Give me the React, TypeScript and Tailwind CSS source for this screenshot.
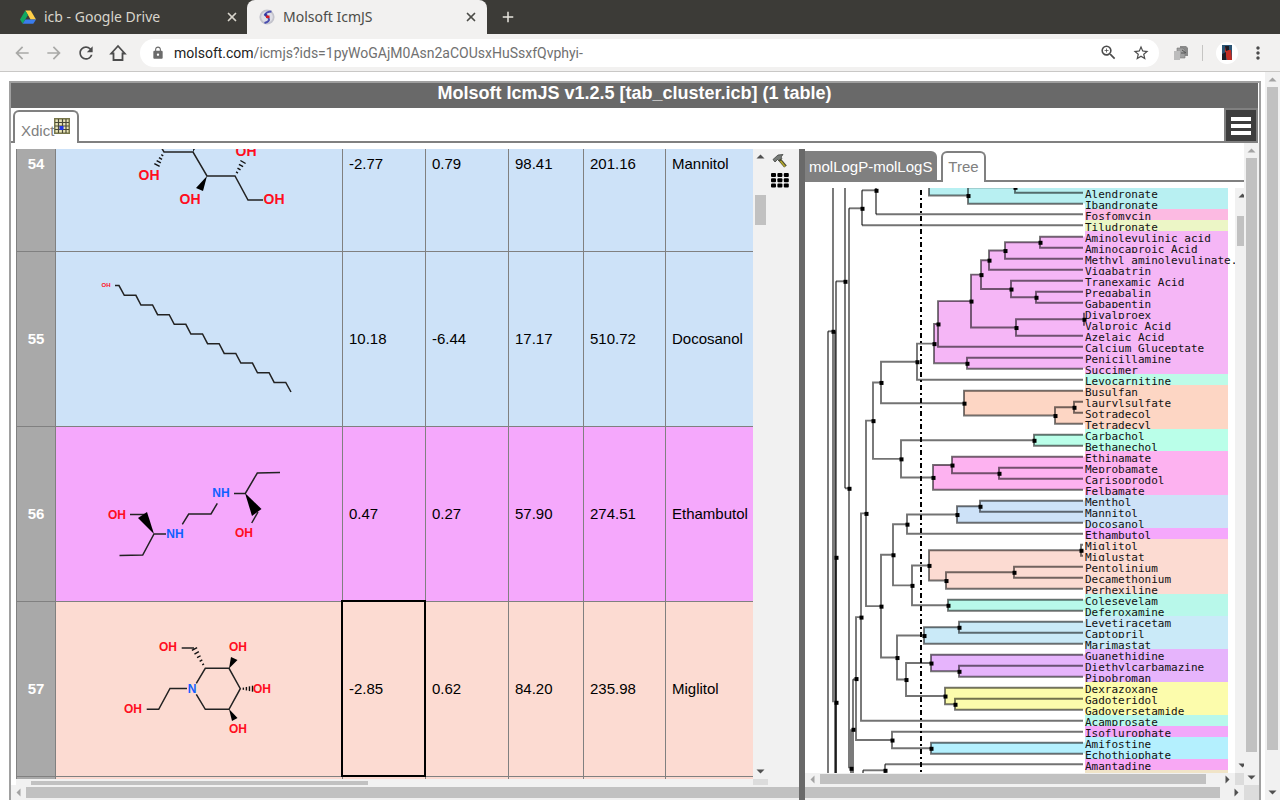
import React from 'react';
import { X } from 'lucide-react';
import {
  MdAdd,
  MdArrowBack,
  MdArrowForward,
  MdLock,
  MdMoreVert,
  MdRefresh,
  MdStarBorder,
  MdZoomIn,
} from 'react-icons/md';

type TreeNode = { x: number; kids: [TreeNode | number, TreeNode | number]; fill?: string };

// y of a leaf line, rows are 11px high
const leafY = (i: number) => 4.5 + i * 11;
const LEAF_X = 278;

const n = (x: number, a: TreeNode | number, b: TreeNode | number, fill?: string): TreeNode => ({ x, kids: [a, b], fill });

const labels: [string, string][] = [
  ['Alendronate', '#b8f0f2'],
  ['Ibandronate', '#b8f0f2'],
  ['Fosfomycin', '#fcbae2'],
  ['Tiludronate', '#ecf6c6'],
  ['Aminolevulinic acid', '#f5b6f6'],
  ['Aminocaproic Acid', '#f5b6f6'],
  ['Methyl aminolevulinate.', '#f5b6f6'],
  ['Vigabatrin', '#f5b6f6'],
  ['Tranexamic Acid', '#f5b6f6'],
  ['Pregabalin', '#f5b6f6'],
  ['Gabapentin', '#f5b6f6'],
  ['Divalproex', '#f5b6f6'],
  ['Valproic Acid', '#f5b6f6'],
  ['Azelaic Acid', '#f5b6f6'],
  ['Calcium Gluceptate', '#f5b6f6'],
  ['Penicillamine', '#f5b6f6'],
  ['Succimer', '#f5b6f6'],
  ['Levocarnitine', '#bdfbe8'],
  ['Busulfan', '#fdd6c4'],
  ['laurylsulfate', '#fdd6c4'],
  ['Sotradecol', '#fdd6c4'],
  ['Tetradecyl', '#fdd6c4'],
  ['Carbachol', '#baffe9'],
  ['Bethanechol', '#baffe9'],
  ['Ethinamate', '#fdb2f0'],
  ['Meprobamate', '#fdb2f0'],
  ['Carisoprodol', '#fdb2f0'],
  ['Felbamate', '#fdb2f0'],
  ['Menthol', '#cde2f8'],
  ['Mannitol', '#cde2f8'],
  ['Docosanol', '#cde2f8'],
  ['Ethambutol', '#f5a8fc'],
  ['Miglitol', '#fcdbd2'],
  ['Miglustat', '#fcdbd2'],
  ['Pentolinium', '#fcdbd2'],
  ['Decamethonium', '#fcdbd2'],
  ['Perhexiline', '#fcdbd2'],
  ['Colesevelam', '#b8f8ea'],
  ['Deferoxamine', '#b8f8ea'],
  ['Levetiracetam', '#caeaf8'],
  ['Captopril', '#caeaf8'],
  ['Marimastat', '#caeaf8'],
  ['Guanethidine', '#e6b4fc'],
  ['Diethylcarbamazine', '#e6b4fc'],
  ['Pipobroman', '#e6b4fc'],
  ['Dexrazoxane', '#fcfcac'],
  ['Gadoteridol', '#fcfcac'],
  ['Gadoversetamide', '#fcfcac'],
  ['Acamprosate', '#b8f8ec'],
  ['Isoflurophate', '#f2a8fa'],
  ['Amifostine', '#b4f0fe'],
  ['Echothiophate', '#b4f0fe'],
  ['Amantadine', '#f8a8f4'],
  ['Lindane', '#f0e4c8'],
];

const pink = n(
  129,
  n(
    133,
    n(
      166,
      n(176, n(184, n(200, n(235, 4, 5), 6), 7), n(206, 8, n(231, 9, 10))),
      n(211, n(279, 11, 12), 13)
    ),
    14
  ),
  n(162, 15, 16),
  '#f5b6f6'
);

const upper = n(
  68,
  n(76, n(112, pink, 17), n(159, 18, n(250, n(269, 19, 20), 21), '#fdd6c4')),
  n(96, n(229, 22, 23, '#baffe9'), n(128, n(147, 24, n(194, 25, 26)), 27, '#fdb2f0'))
);

const lower = n(
  76,
  n(
    88,
    n(102, n(152, n(175, 28, 29), 30, '#cde2f8'), 31),
    n(107, n(124, n(276, 32, 33), n(141, n(209, 34, 35), 36), '#fcdbd2'), n(143, 37, 38, '#b8f8ea'))
  ),
  n(
    92,
    n(119, n(154, 39, 40), 41, '#caeaf8'),
    n(101, n(126, 42, n(154, 43, 44), '#e6b4fc'), n(140, 45, n(150, 46, 47), '#fcfcac'))
  )
);

const mainTree = n(51, n(56, n(61, upper, lower), 48), n(87, 49, n(126, 50, 51, '#b4f0fe')));
const topTree = n(124, -6, n(163, n(210, -1, 0), 1), '#b8f0f2');

const nodeY = (t: TreeNode | number): number =>
  typeof t === 'number' ? leafY(t) : (nodeY(t.kids[0]) + nodeY(t.kids[1])) / 2;

// long trunk segments which run out of the visible area: x1 y1 x2 y2
const trunk: number[][] = [
  [23, 143, 23, 640],
  [23, 143, 28, 143],
  [28, -2, 28, 514],
  [31, 93, 31, 640],
  [30, 143, 30, 640],
  [31, 369, 31, 640],
  [31, 93, 40, 93],
  [40, -2, 40, 300],
  [40, 300, 44, 300],
  [44, 20, 44, 580],
  [44, 20, 57, 20],
  [57, 2, 57, 37],
  [57, 2, 71, 2],
  [71, -2, 71, 26],
  [71, 26, 278, 26],
  [57, 37, 278, 37],
  [46, 541, 46, 640],
  [48, 491, 48, 640],
  [48, 491, 51, 491],
  [58, 582, 58, 640],
  [58, 582, 80, 582],
  [80, 576, 80, 640],
  [80, 576, 278, 576],
];

const dots: number[][] = [
  [28, 143], [31, 369], [31, 514], [40, 93], [44, 300], [57, 20], [71, 2], [46, 580], [48, 541], [80, 582],
];

const Fills = ({ t, fill }: { t: TreeNode | number; fill?: string }) => {
  if (typeof t === 'number') return null;
  const color = t.fill || fill;
  const y1 = nodeY(t.kids[0]);
  const y2 = nodeY(t.kids[1]);
  return (
    <>
      {color && t.x < 275 && <rect x={t.x} y={y1} width={280 - t.x} height={y2 - y1} fill={color} />}
      <Fills t={t.kids[0]} fill={color} />
      <Fills t={t.kids[1]} fill={color} />
    </>
  );
};

const Branches = ({ t }: { t: TreeNode | number }) => {
  if (typeof t === 'number') return null;
  const y1 = nodeY(t.kids[0]);
  const y2 = nodeY(t.kids[1]);
  const x1 = typeof t.kids[0] === 'number' ? LEAF_X : t.kids[0].x;
  const x2 = typeof t.kids[1] === 'number' ? LEAF_X : t.kids[1].x;
  return (
    <>
      <path d={`M${x1} ${y1}H${t.x}V${y2}H${x2}`} fill="none" stroke="#000" strokeOpacity="0.55" strokeWidth="1.9" />
      <rect x={t.x - 1.5} y={nodeY(t) - 1.5} width="4" height="4" />
      <Branches t={t.kids[0]} />
      <Branches t={t.kids[1]} />
    </>
  );
};

const Dendrogram = () => (
  <svg className="block h-full w-full" role="img" aria-label="Cluster tree">
    <Fills t={topTree} />
    <Fills t={mainTree} />
    {labels.map(([name, color], i) => (
      <g key={name}>
        <rect x="280" y={i * 11 - 1} width="143" height="11" fill={color} />
        <rect x="423" y={i * 11 - 1} width="20" height="11" fill="#fff" />
        <text x="280" y={i * 11 + 10} fontSize="11" fontFamily="'DejaVu Sans Mono', monospace" fill="#111">
          {name}
        </text>
      </g>
    ))}
    <g transform="translate(0 0.3)">
      <g stroke="#000" strokeOpacity="0.55" strokeWidth="1.9">
        {trunk.map(([x1, y1, x2, y2], i) => (
          <line key={i} x1={x1} y1={y1} x2={x2} y2={y2} />
        ))}
      </g>
      <Branches t={topTree} />
      <Branches t={mainTree} />
      {dots.map(([x, y], i) => (
        <rect key={i} x={x - 1.5} y={y - 1.5} width="4" height="4" />
      ))}
    </g>
    <line x1="116" y1="2" x2="116" y2="1200" stroke="#000" strokeWidth="2" strokeDasharray="5 3 2 3" />
  </svg>
);

/* ---- molecules ---- */

const Atom = ({ x, y, size = 12, children }: { x: number; y: number; size?: number; children: string }) => (
  <text
    x={x}
    y={y + size * 0.36}
    textAnchor="middle"
    fontSize={size}
    fontWeight="700"
    fontFamily="'Liberation Sans', Arial, sans-serif"
    fill={children[0] === 'N' ? '#1060ff' : '#ff0d20'}
  >
    {children}
  </text>
);

const Bond = ({ p }: { p: string }) => <polyline points={p} fill="none" stroke="#222" strokeWidth="1.5" />;

const Hash = ({ from, to, count = 5, wide = 5 }: { from: number[]; to: number[]; count?: number; wide?: number }) => {
  const dx = to[0] - from[0];
  const dy = to[1] - from[1];
  const len = Math.hypot(dx, dy);
  return (
    <g stroke="#111" strokeWidth="1.4">
      {Array.from({ length: count }, (_, i) => {
        const t = (i + 1) / count;
        const w = (wide * t) / 2 + 0.5;
        const cx = from[0] + dx * t;
        const cy = from[1] + dy * t;
        return (
          <line
            key={i}
            x1={cx - (dy / len) * w}
            y1={cy + (dx / len) * w}
            x2={cx + (dy / len) * w}
            y2={cy - (dx / len) * w}
          />
        );
      })}
    </g>
  );
};

const Mannitol = () => (
  <>
    <Bond p="94,51 108,75 137,75 151,99 179,99 192,123 207,123" />
    <polygon points="137,75 138,60 145,63" />
    <polygon points="151,99 140,111 147,114" />
    <Hash from={[108, 75]} to={[101, 88]} count={4} />
    <Hash from={[179, 99]} to={[187, 85]} count={4} />
    <Atom x={93} y={98} size={14}>OH</Atom>
    <Atom x={134} y={122} size={14}>OH</Atom>
    <Atom x={190} y={74} size={14}>OH</Atom>
    <Atom x={218} y={122} size={14}>OH</Atom>
  </>
);

const chain = Array.from({ length: 10 }, (_, i) => {
  const x = 68.3 + i * 16.65;
  const y = 43.3 + i * 9.68;
  return `${x},${y} ${x + 11.6},${y}`;
}).join(' ');

const Docosanol = () => (
  <>
    <Bond p={`59,33.6 63,33.6 ${chain} 235,140`} />
    <Atom x={50} y={33} size={6}>OH</Atom>
  </>
);

const Ethambutol = () => (
  <>
    <Bond p="74,87.5 89,87.5" />
    <polygon points="98,107 82,91 91,85" />
    <Bond p="110,107 98,107 86.7,128 63.5,128.5" />
    <Bond p="126.3,97.3 132.7,87 155,87 161.3,76.3" />
    <Bond p="178,66.4 189.3,66.4 201.3,46 224,45.6" />
    <polygon points="189,66 196,89 205.5,82" />
    <Bond p="202,85 195.7,96" />
    <Atom x={61} y={88}>OH</Atom>
    <Atom x={119} y={107}>NH</Atom>
    <Atom x={165} y={66}>NH</Atom>
    <Atom x={188} y={106}>OH</Atom>
  </>
);

const Miglitol = () => (
  <>
    <Bond p="140.3,81.3 149.3,66.3 173,66.3 184.3,86.7 173,107.3 149.3,107.3 140.3,92.3" />
    <Bond p="131,86.5 114,86.5 102.7,107.3 90.7,107.3" />
    <Bond p="125.7,46 138,46" />
    <Hash from={[149.3, 66.3]} to={[138.5, 47]} count={5} />
    <Hash from={[184.3, 86.7]} to={[196.5, 86.7]} count={4} />
    <polygon points="173,66.5 175,55 181.5,58" />
    <polygon points="173,107 176,119 181.5,116" />
    <Atom x={136} y={87}>N</Atom>
    <Atom x={112} y={45}>OH</Atom>
    <Atom x={182} y={45}>OH</Atom>
    <Atom x={206} y={87}>OH</Atom>
    <Atom x={182} y={127}>OH</Atom>
    <Atom x={77} y={107}>OH</Atom>
  </>
);

const rows = [
  { id: '54', bg: 'bg-[#cde2f8]', mol: <Mannitol />, vals: ['-2.77', '0.79', '98.41', '201.16', 'Mannitol'] },
  { id: '55', bg: 'bg-[#cde2f8]', mol: <Docosanol />, vals: ['10.18', '-6.44', '17.17', '510.72', 'Docosanol'] },
  { id: '56', bg: 'bg-[#f5a8fc]', mol: <Ethambutol />, vals: ['0.47', '0.27', '57.90', '274.51', 'Ethambutol'] },
  { id: '57', bg: 'bg-[#fcdbd2]', mol: <Miglitol />, vals: ['-2.85', '0.62', '84.20', '235.98', 'Miglitol'] },
  { id: '', bg: 'bg-[#fcdbd2]', mol: null, vals: ['', '', '', '', ''] },
];

const DataTable = () => (
  <table className="-mt-[72px] w-full table-fixed border-separate border-spacing-0 text-[15px] text-black">
    <colgroup>
      <col className="w-[40px]" />
      <col className="w-[287px]" />
      <col className="w-[83px]" />
      <col className="w-[83px]" />
      <col className="w-[75px]" />
      <col className="w-[82px]" />
      <col />
    </colgroup>
    <tbody>
      {rows.map((row) => (
        <tr key={row.id} className={row.bg}>
          <th
            scope="row"
            className="h-[175px] border-r border-b border-l border-[#808080] bg-[#a9a9a9] p-0 text-center font-bold text-white"
          >
            {row.id}
          </th>
          <td className="border-r border-b border-[#808080] p-0">
            <svg className="block" width="286" height="174">{row.mol}</svg>
          </td>
          {row.vals.map((v, i) => (
            <td
              key={i}
              className={`relative border-b border-[#808080] py-0 pr-0 pl-[6px] ${i < 4 ? 'border-r' : ''}`}
            >
              {v}
              {row.id === '57' && i === 0 && (
                <span className="absolute -top-[2px] -right-px -bottom-px -left-[2px] border-2 border-black" />
              )}
            </td>
          ))}
        </tr>
      ))}
    </tbody>
  </table>
);

/* ---- scroll bars ---- */

const Arrow = ({ dir, muted }: { dir: 'up' | 'down' | 'left' | 'right'; muted?: boolean }) => {
  const d = {
    up: 'M3.5 9.5H11.5L7.5 5.5Z',
    down: 'M3.5 5.5H11.5L7.5 9.5Z',
    left: 'M9.5 3.5V11.5L5.5 7.5Z',
    right: 'M5.5 3.5V11.5L9.5 7.5Z',
  }[dir];
  return (
    <svg className="block size-[15px] shrink-0" viewBox="0 0 15 15" aria-hidden="true">
      <path d={d} fill={muted ? '#a3a3a3' : '#505050'} />
    </svg>
  );
};

const DriveIcon = () => (
  <svg className="size-4 shrink-0" viewBox="0 0 16 16">
    <path d="M5.3 1.5h5.4L16 10.5h-5.4z" fill="#ffcf48" />
    <path d="M5.3 1.5L0 10.5l2.7 4.2L8 6z" fill="#11a861" />
    <path d="M5.4 10.5H16l-2.7 4.2H2.7z" fill="#3a7cec" />
  </svg>
);

const MolsoftIcon = () => (
  <svg className="size-4 shrink-0" viewBox="0 0 16 16">
    <circle cx="8" cy="8" r="7.6" fill="#c4c4cc" />
    <circle cx="8" cy="8" r="5.8" fill="#dedee6" />
    <path d="M12.500 2.500C9 2.500 6 4 6.500 6L9.500 9C11 11.500 9 13 5.500 14" fill="none" stroke="#4a4eae" strokeWidth="2" />
    <path d="M5.500 5L8 7" stroke="#3036a0" strokeWidth="2.5" />
    <path d="M7 7.800H10.500" stroke="#d01826" strokeWidth="2.6" />
  </svg>
);

const HomeIcon = () => (
  <svg className="size-5" viewBox="0 0 20 20">
    <path d="M10 3L3.200 10.500H5.500V17H14.500V10.500H16.800Z" fill="none" stroke="currentColor" strokeWidth="1.8" />
  </svg>
);

const TableIcon = () => (
  <svg className="size-4 shrink-0 self-start" viewBox="0 0 16 16">
    <rect x="0.75" y="0.75" width="14.5" height="14.5" fill="#e8e4b8" stroke="#77764a" strokeWidth="1.5" />
    <path d="M4.500 1V15M8.500 1V15M12 1V15M1 4.500H15M1 8H15M1 11.500H15" stroke="#4a4a38" strokeWidth="1.2" />
    <rect x="5.500" y="8" width="4" height="4" fill="#2236e8" />
  </svg>
);

const HammerIcon = () => (
  <svg className="size-4" viewBox="0 0 16 16">
    <path d="M1 6.500L6 2L11 1.500L9 4L10 5.500L7 8L5.500 6.500L3 9Z" fill="#777b78" stroke="#3f413f" strokeWidth="0.8" />
    <path d="M7.500 6.500L13.500 13.500" stroke="#4c4c35" strokeWidth="3.4" />
    <path d="M8.500 8L13 13.500" stroke="#b8ab2a" strokeWidth="1.5" />
  </svg>
);

const GridIcon = () => (
  <svg className="h-[15px] w-[18px]" viewBox="0 0 18 15">
    {[0, 1, 2].map((r) =>
      [0, 1, 2].map((c) => <rect key={`${r}${c}`} x={c * 6.4} y={r * 5.2} width="5" height="4" rx="1" />)
    )}
  </svg>
);

const Browser = () => (
  <header className="shrink-0 border-b border-[#c9c8c6] bg-[#f2f1f0] font-['Noto_Sans',sans-serif] text-sm">
    <div className="flex h-[34px] bg-[#3c3b37]">
      <div className="flex w-[247px] items-center gap-2 pr-2 pl-5 text-[#d8d5cc]">
        <DriveIcon />
        <span className="flex-1 whitespace-nowrap">icb - Google Drive</span>
        <button aria-label="Close tab"><X size={14} strokeWidth={3} /></button>
      </div>
      <div className="flex w-[240px] items-center gap-2 rounded-t-lg bg-[#f2f1f0] pr-[9px] pl-3 text-[#4c4c48]">
        <MolsoftIcon />
        <span className="flex-1 whitespace-nowrap">Molsoft IcmJS</span>
        <button aria-label="Close tab"><X size={14} strokeWidth={3} /></button>
      </div>
      <button aria-label="New tab" className="ml-3 text-[#e8e6df]"><MdAdd size={18} /></button>
    </div>
    <div className="flex h-[37px] items-center pl-3 text-[#4c4c4c]">
      <div className="flex w-32 gap-3">
        <button aria-label="Back" className="text-[#a9a9a7]"><MdArrowBack size={20} /></button>
        <button aria-label="Forward" className="text-[#a9a9a7]"><MdArrowForward size={20} /></button>
        <button aria-label="Reload"><MdRefresh size={20} /></button>
        <button aria-label="Home"><HomeIcon /></button>
      </div>
      <div className="flex h-7 flex-1 items-center rounded-full bg-white pr-[9px] pl-[11px] font-[Roboto,sans-serif]">
        <MdLock size={14} className="mr-[9px] text-[#6b6b6b]" />
        <label htmlFor="url" className="text-[#222]">molsoft.com</label>
        <input
          id="url"
          className="min-w-0 flex-1 bg-transparent text-[#707070] outline-none"
          defaultValue="/icmjs?ids=1pyWoGAjM0Asn2aCOUsxHuSsxfQvphyi-"
        />
        <button aria-label="Zoom" className="mr-[14px]"><MdZoomIn size={19} /></button>
        <button aria-label="Bookmark"><MdStarBorder size={18} /></button>
      </div>
      <div className="flex w-[121px] items-center pl-[14px]">
        <svg className="size-4" viewBox="0 0 16 16">
          <path d="M7 1h6l2 2v8H7z" fill="#8a8a8a" />
          <path d="M4 3h6l2 2v8H4z" fill="#a0a0a0" stroke="#777" strokeWidth="0.6" />
          <path d="M1 6h6v9H1z" fill="#bcbcbc" />
          <path d="M9 5l4 3M8 8h4" stroke="#555" />
        </svg>
        <span className="mx-[13px] h-4 w-px bg-[#c6c5c3]" />
        <button aria-label="Profile" className="flex size-[22px] items-center justify-center rounded-full bg-white">
          <svg className="h-[15px] w-[10px]" viewBox="0 0 10 15">
            <path d="M0 0H10V15H0Z" fill="#2c5575" />
            <path d="M3 1H7V5H9L10 15H5L3 8Z" fill="#c12d24" />
            <path d="M3 1H7V5L4 6ZM0 9L4 7V15H0Z" fill="#1b1d26" />
          </svg>
        </button>
        <button aria-label="Menu" className="ml-[10px]"><MdMoreVert size={20} /></button>
      </div>
    </div>
  </header>
);

const TablePane = () => (
  <div className="flex min-w-0 flex-1 flex-col">
    <div className="flex min-h-0 flex-1 pl-[5px]">
      <div className="flex min-w-0 flex-1 flex-col">
        <div className="min-h-0 flex-1 overflow-hidden">
          <DataTable />
        </div>
        <div className="h-[6px] shrink-0 bg-[#f1f1f1] pt-[2px] pl-[15px]">
          <div className="h-1 w-[337px] bg-[#c1c1c1]" />
        </div>
      </div>
      <div className="flex w-[15px] flex-col bg-[#f1f1f1]">
        <Arrow dir="up" />
        <div className="mt-[31px] ml-[2px] h-[30px] w-[11px] bg-[#c1c1c1]" />
        <div className="flex-1" />
        <Arrow dir="down" />
        <div className="h-[6px] shrink-0 bg-[#dcdcdc]" />
      </div>
      <div className="flex w-[31px] flex-col items-center gap-1 bg-[#f1f1f1] pt-1 pr-[7px]">
        <button aria-label="Tools"><HammerIcon /></button>
        <button aria-label="Grid view"><GridIcon /></button>
      </div>
    </div>
    <div className="flex h-[15px] shrink-0 items-center bg-[#f1f1f1]">
      <Arrow dir="left" muted />
      <div className="h-[11px] flex-1 bg-[#c1c1c1]" />
    </div>
  </div>
);

const TreePane = () => (
  <div className="flex w-[439px] shrink-0 flex-col text-[15px]">
    <div className="flex h-[33px] shrink-0 pt-[2px]">
      <div className="border-b-2 border-[#808080] pr-1">
        <button className="h-[29px] w-[132px] rounded-tr-md bg-[#808080] pt-1 pl-1 text-left text-white">
          molLogP-molLogS
        </button>
      </div>
      <button className="w-[45px] rounded-t-md border-x-2 border-t-2 border-[#808080] text-[#808080]">Tree</button>
      <div className="flex-1 border-b-2 border-[#808080]" />
    </div>
    <div className="flex min-h-0 flex-1 pt-[6px]">
      <div className="min-w-0 flex-1 overflow-hidden">
        <Dendrogram />
      </div>
      <div className="flex w-[9px] flex-col overflow-hidden bg-[#f1f1f1]">
        <Arrow dir="up" />
        <div className="mt-[13px] ml-[2px] h-[30px] bg-[#c1c1c1]" />
        <div className="flex-1" />
        <Arrow dir="down" />
      </div>
    </div>
    <div className="flex h-[12px] shrink-0 bg-[#f1f1f1]">
      <div className="flex flex-1 items-center">
        <Arrow dir="left" muted />
        <div className="mr-[14px] h-[10px] flex-1 bg-[#c1c1c1]" />
        <Arrow dir="right" />
      </div>
      <div className="w-[9px] bg-[#dcdcdc]" />
    </div>
    <div className="flex h-[15px] shrink-0 items-center bg-[#f1f1f1]">
      <div className="mr-[9px] h-[11px] flex-1 bg-[#c1c1c1]" />
      <Arrow dir="right" />
    </div>
  </div>
);

export default function App() {
  return (
    <div className="flex h-screen flex-col overflow-hidden bg-white font-['Liberation_Sans',Arial,sans-serif]">
      <Browser />
      <div className="flex min-h-0 flex-1">
        <main className="mt-[9px] mr-1 ml-[9px] flex min-w-0 flex-1 flex-col border-x-2 border-t-2 border-[#a0a0a0]">
          <h1 className="mr-px h-[25px] shrink-0 bg-[#696969] text-center text-lg leading-5 font-bold text-white">
            Molsoft IcmJS v1.2.5 [tab_cluster.icb] (1 table)
          </h1>
          <div className="flex h-[35px] shrink-0 text-[15px] text-[#808080]">
            <div className="w-[2px] border-b-2 border-[#808080]" />
            <button className="mt-[2px] flex w-[66px] items-end rounded-t-md border-x-2 border-t-2 border-[#808080] pt-[6px] pl-[6px]">
              <span className="leading-6">Xdict</span>
              <TableIcon />
            </button>
            <div className="flex-1 border-b-2 border-[#808080]" />
            <button
              aria-label="Menu"
              className="mr-px flex w-[34px] flex-col items-center justify-center gap-[3px] border-2 border-[#808080] bg-[#3d3d3d]"
            >
              <span className="h-1 w-5 bg-white" />
              <span className="h-1 w-5 bg-white" />
              <span className="h-1 w-5 bg-white" />
            </button>
          </div>
          <div className="flex min-h-0 flex-1">
            <div className="flex min-w-0 flex-1 pt-[6px]">
              <TablePane />
              <div className="w-[6px] shrink-0 bg-[#696969]" />
              <TreePane />
            </div>
            <div className="flex w-[15px] flex-col bg-[#f1f1f1]">
              <Arrow dir="up" muted />
              <div className="mx-[2px] mb-[18px] flex-1 bg-[#c1c1c1]" />
              <Arrow dir="down" />
              <div className="h-[15px] shrink-0 bg-[#dcdcdc]" />
            </div>
          </div>
        </main>
        <div className="flex w-[15px] flex-col bg-[#f1f1f1]">
          <Arrow dir="up" muted />
          <div className="mx-[2px] mb-[35px] flex-1 bg-[#c1c1c1]" />
          <Arrow dir="down" />
        </div>
      </div>
    </div>
  );
}
